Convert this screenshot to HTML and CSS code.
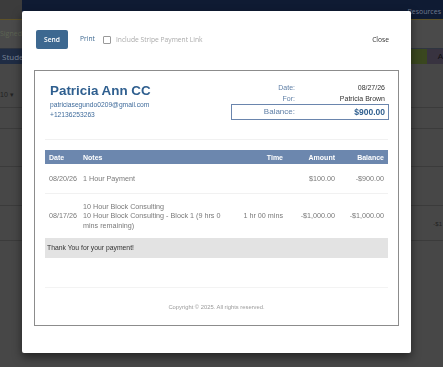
FILE: index.html
```html
<!DOCTYPE html>
<html lang="en">
<head>
  <meta charset="UTF-8">
  <meta name="viewport" content="width=device-width, initial-scale=1">
  <title>Invoice</title>
  <link rel="stylesheet" href="styles.css">
</head>

<body>

<div class="page">
  <div class="topnav">
    <div class="nav-side"></div>
    <div class="nav-main"><span class="nav-link">Resources</span></div>
  </div>
  <div class="subbar"><span class="signed">Signed</span></div>
  <div class="studbar">
    <span class="stud">Students</span>
    <span class="tag-green"></span>
    <span class="tag-purple">A</span>
  </div>
  <div class="rows">
    <div class="bg-row tall"><span class="pager">10 &#9662;</span></div>
    <div class="bg-row r21"></div>
    <div class="bg-row r38"></div>
    <div class="bg-row r39"></div>
    <div class="bg-row r35"><span class="neg">-$1</span></div>
  </div>
</div>

<div class="modal">
  <div class="toolbar">
    <button class="btn-send">Send</button>
    <a class="print-link">Print</a>
    <span class="check"></span>
    <span class="check-label">Include Stripe Payment Link</span>
    <a class="close-link">Close</a>
  </div>

  <div class="invoice">
    <div class="inv-head">
      <div class="client">
        <h1 class="client-name">Patricia Ann CC</h1>
        <div class="client-line first">patriciasegundo0209@gmail.com</div>
        <div class="client-line">+12136253263</div>
      </div>
      <div class="meta">
        <div class="meta-row"><span class="lbl">Date:</span><span class="val">08/27/26</span></div>
        <div class="meta-row"><span class="lbl">For:</span><span class="val">Patricia Brown</span></div>
        <div class="meta-row balance"><span class="lbl">Balance:</span><span class="val">$900.00</span></div>
      </div>
    </div>

    <table class="items">
      <thead>
        <tr>
          <th class="c-date">Date</th>
          <th class="c-notes">Notes</th>
          <th class="c-time num">Time</th>
          <th class="c-amt num">Amount</th>
          <th class="c-bal num">Balance</th>
        </tr>
      </thead>
      <tbody>
        <tr class="row-one">
          <td>08/20/26</td>
          <td>1 Hour Payment</td>
          <td class="num"></td>
          <td class="num">$100.00</td>
          <td class="num">-$900.00</td>
        </tr>
        <tr class="row-two">
          <td>08/17/26</td>
          <td>10 Hour Block Consulting<br>10 Hour Block Consulting - Block 1 (9 hrs 0 mins remaining)</td>
          <td class="num">1 hr 00 mins</td>
          <td class="num">-$1,000.00</td>
          <td class="num">-$1,000.00</td>
        </tr>
        <tr class="thanks">
          <td colspan="5">Thank You for your payment!</td>
        </tr>
      </tbody>
    </table>

    <div class="inv-foot">Copyright &copy; 2025. All rights reserved.</div>
  </div>
</div>

</body>
</html>
```

FILE: styles.css
```css
body {
  margin: 0;
  width: 443px;
  height: 367px;
  overflow: hidden;
  background: #474747;
  font-family: "Liberation Sans", Arial, sans-serif;
}

/* dimmed page behind the modal */
.page {
  height: 367px;
  background: #474747;
}
.topnav {
  display: flex;
  height: 19px;
  border-bottom: 1px solid #5e5228;
}
.nav-side {
  width: 22px;
  background: #3c3c3c;
}
.nav-main {
  flex: 1;
  background: #0f1b33;
  text-align: right;
  padding-right: 2px;
}
.nav-link {
  font-family: "Open Sans", sans-serif;
  font-size: 7px;
  line-height: 12px;
  color: #6f7a8f;
}
.subbar {
  height: 28px;
  background: #4a4a4a;
  border-bottom: 1px solid #2f3540;
}
.signed {
  display: block;
  font-family: "Open Sans", sans-serif;
  font-size: 7px;
  line-height: 28px;
  color: #5d6453;
}
.studbar {
  display: flex;
  height: 15px;
  background: #1f2c44;
}
.stud {
  flex: 1;
  font-family: "Open Sans", sans-serif;
  font-size: 8px;
  line-height: 15px;
  padding-left: 2px;
  color: #7a8599;
}
.tag-green {
  width: 16px;
  background: #3a471f;
}
.tag-purple {
  width: 16px;
  background: #383340;
  color: #111;
  font-size: 8px;
  line-height: 15px;
  text-align: right;
}
.bg-row {
  border-bottom: 1px solid #3b3b3b;
}
.tall { height: 43px; }
.r21 { height: 20px; }
.r38 { height: 37px; }
.r39 { height: 38px; }
.r35 { height: 34px; }
.pager {
  display: block;
  padding-top: 27px;
  font-size: 7px;
  color: #222;
}
.neg {
  display: block;
  text-align: right;
  padding: 15px 1px 0 0;
  font-size: 6px;
  color: #222;
}

/* modal */
.modal {
  position: fixed;
  left: 22px;
  top: 11px;
  width: 389px;
  height: 342px;
  background: #fff;
  border-radius: 2px;
  box-shadow: 0 4px 10px rgba(0,0,0,0.5);
}
.toolbar {
  display: flex;
  align-items: center;
  height: 19px;
  padding: 19px 22px 0 14px;
  font-family: "Open Sans", sans-serif;
  font-size: 6.7px;
}
.btn-send {
  width: 32px;
  height: 19px;
  padding: 0;
  border: none;
  border-radius: 2px;
  background: #3d6890;
  color: #fff;
  font-family: "Open Sans", sans-serif;
  font-size: 6.7px;
  font-weight: 600;
}
.print-link {
  margin-left: 12px;
  margin-top: -2px;
  color: #3d6890;
}
.check {
  width: 6px;
  height: 6px;
  margin-left: 8px;
  border: 1px solid #9a9a9a;
  border-radius: 1px;
}
.check-label {
  margin-left: 5px;
  color: #ababab;
}
.close-link {
  margin-left: auto;
  color: #333;
}

/* invoice */
.invoice {
  margin: 21px 12px 0;
  height: 256px;
  box-sizing: border-box;
  border: 1.5px solid #8c8c8c;
  padding: 0 10px;
  display: flex;
  flex-direction: column;
}
.inv-head {
  display: flex;
  justify-content: space-between;
  height: 56px;
  padding: 12px 0 0 5px;
  border-bottom: 1px solid #f1f1f1;
}
.client-name {
  margin: 0;
  font-size: 13.4px;
  line-height: 16px;
  font-weight: bold;
  color: #2f5f8f;
}
.client-line {
  font-size: 6.7px;
  line-height: 10px;
  color: #3f6b9b;
}
.client-line.first {
  margin-top: 1px;
}
.meta {
  width: 158px;
  margin-right: -1px;
}
.meta-row {
  display: grid;
  grid-template-columns: 63px 1fr;
  text-align: right;
  font-size: 7px;
  line-height: 10.5px;
  padding-right: 3px;
  border: 1px solid transparent;
  border-width: 0 1px;
}
.meta-row .lbl {
  color: #5f7fa6;
}
.meta-row .val {
  color: #333;
}
.meta-row.balance {
  margin-top: 0;
  height: 14px;
  line-height: 14px;
  border: 1px solid #6a85ad;
}
.balance .lbl {
  font-size: 8px;
}
.balance .val {
  font-size: 8.5px;
  font-weight: bold;
  color: #2f5f8f;
}

.items {
  margin-top: 10px;
  width: 100%;
  border-collapse: collapse;
  table-layout: fixed;
  font-size: 7.2px;
}
.items th {
  height: 14px;
  padding: 0 4px;
  background: #6c87ae;
  color: #fff;
  font-weight: bold;
  font-size: 7px;
  text-align: left;
}
.items td {
  padding: 0 4px;
  color: #7a7a7a;
  line-height: 9.5px;
}
.items .num {
  text-align: right;
}
.c-date { width: 26px; }
.c-time { width: 42px; }
.c-amt { width: 44px; }
.c-bal { width: 41px; }
.row-one td {
  height: 28px;
  padding-top: 1px;
  border-bottom: 1px solid #f1f1f1;
}
.row-two td {
  height: 44px;
}
.thanks td {
  height: 20px;
  padding: 0 2px;
  background: #e3e3e3;
  color: #333;
  font-size: 6.8px;
}

.inv-foot {
  margin-top: auto;
  height: 37px;
  border-top: 1px solid #f3f3f3;
  text-align: center;
  font-size: 5.8px;
  line-height: 38px;
  color: #9a9a9a;
}
```
